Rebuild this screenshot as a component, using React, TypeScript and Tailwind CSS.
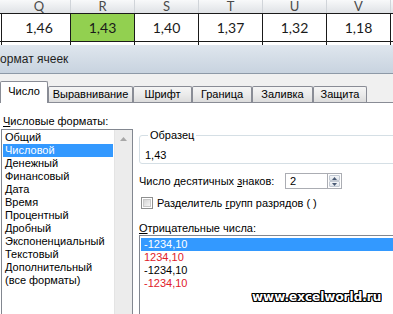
const cols = [
  { name: "Q", w: "w-[69px]", pl: "pl-[6px]", v1: "1,46", v2: "1,42", green: false },
  { name: "R", w: "w-[64px]", pl: "", v1: "1,43", v2: "1,45", green: true },
  { name: "S", w: "w-[64px]", pl: "", v1: "1,40", v2: "1,41", green: false },
  { name: "T", w: "w-[64px]", pl: "", v1: "1,37", v2: "1,38", green: false },
  { name: "U", w: "w-[64px]", pl: "", v1: "1,32", v2: "1,33", green: false },
  { name: "V", w: "w-[64px]", pl: "", v1: "1,18", v2: "1,20", green: false },
];

const tabs = [
  { label: "Число", w: "w-[48px]", active: true },
  { label: "Выравнивание", w: "w-[85px]", active: false },
  { label: "Шрифт", w: "w-[59px]", active: false },
  { label: "Граница", w: "w-[60px]", active: false },
  { label: "Заливка", w: "w-[61px]", active: false },
  { label: "Защита", w: "w-[54px]", active: false },
];

const formats = [
  "Общий",
  "Числовой",
  "Денежный",
  "Финансовый",
  "Дата",
  "Время",
  "Процентный",
  "Дробный",
  "Экспоненциальный",
  "Текстовый",
  "Дополнительный",
  "(все форматы)",
];

const negatives = [
  { text: "-1234,10", red: false, selected: true },
  { text: "1234,10", red: true, selected: false },
  { text: "-1234,10", red: false, selected: false },
  { text: "-1234,10", red: true, selected: false },
];

function Sheet() {
  return (
    <div className="h-[45px] overflow-hidden bg-white font-['Lato',sans-serif]">
      {/* заголовки столбцов */}
      <div className="flex h-[13px] bg-gradient-to-b from-[#f8f9fa] to-[#dfe2e6]">
        <div className="w-[2px]" />
        {cols.map((c) => (
          <div
            key={c.name}
            className={`${c.w} ${c.pl} flex items-center justify-center border-r border-[#d0d4d9] text-[13px] leading-none text-[#4a4a4a]`}
          >
            {c.name}
          </div>
        ))}
      </div>
      <div className="flex h-[29px] border-y border-[#1a1a1a]">
        <div className="w-[2px] border-r border-[#1a1a1a]" />
        {cols.map((c) => (
          <div
            key={c.name}
            className={`${c.w} ${c.pl} flex items-center justify-center border-r border-[#1a1a1a] text-[14px] text-[#1a1a1a] ${c.green ? "bg-[#92d050]" : ""}`}
          >
            {c.v1}
          </div>
        ))}
      </div>
      <div className="flex h-[3px] overflow-hidden">
        <div className="w-[2px] border-r border-[#1a1a1a]" />
        {cols.map((c) => (
          <div
            key={c.name}
            className={`${c.w} ${c.pl} flex items-start justify-center border-r border-[#1a1a1a] pt-[1px] text-[14px] leading-[14px] text-[#1a1a1a]`}
          >
            {c.v2}
          </div>
        ))}
      </div>
    </div>
  );
}

function Spinner() {
  return (
    <div className="flex h-[16px] w-[14px] flex-col border border-l-0 border-[#abadb3] bg-white p-[1px]">
      <div className="flex flex-1 items-center justify-center rounded-[1px] border border-[#c3cad3] bg-gradient-to-b from-[#f4f6f8] to-[#dfe4ea]">
        <svg width="5" height="3" viewBox="0 0 5 3">
          <path d="M0 3 L2.5 0 L5 3 Z" fill="#4a5a74" />
        </svg>
      </div>
      <div className="flex flex-1 items-center justify-center rounded-[1px] border border-[#c3cad3] bg-gradient-to-b from-[#f4f6f8] to-[#dfe4ea]">
        <svg width="5" height="3" viewBox="0 0 5 3">
          <path d="M0 0 L5 0 L2.5 3 Z" fill="#4a5a74" />
        </svg>
      </div>
    </div>
  );
}

export default function App() {
  return (
    <div className="relative h-[314px] w-[393px] overflow-hidden bg-white font-['Liberation_Sans',sans-serif] text-[11px] text-black">
      <Sheet />

      {/* окно диалога */}
      <div className="flex h-[29px] items-center border-b border-[#8d99a7] bg-gradient-to-b from-[#dfe6ee] to-[#c8d3df]">
        <span className="-ml-[9px] text-[12px] text-[#1e1e1e]">Формат ячеек</span>
      </div>

      <div className="flex h-[28px] items-end bg-[#f0f0f0]">
        {tabs.map((t) =>
          t.active ? (
            <div
              key={t.label}
              className={`${t.w} relative z-10 -mb-px flex h-[22px] items-center justify-center rounded-t-[2px] border border-b-0 border-[#898c95] bg-white pb-[2px]`}
            >
              {t.label}
            </div>
          ) : (
            <div
              key={t.label}
              className={`${t.w} flex h-[16px] items-center justify-center rounded-t-[2px] border border-b-0 border-[#898c95] bg-gradient-to-b from-[#f5f5f5] via-[#ebebeb] to-[#dcdcdc]`}
            >
              {t.label}
            </div>
          ),
        )}
      </div>

      <div className="flex border-t border-[#898c95] bg-white">
        {/* левая колонка */}
        <div className="flex w-[133px] shrink-0 flex-col pl-[1px] pt-[11px]">
          <div className="pl-[2px] leading-[14px]">
            <span className="underline">Ч</span>исловые форматы:
          </div>
          <div className="mt-px flex h-[200px] border border-[#828790]">
            <div className="flex-1 px-px pt-px">
              {formats.map((f) => (
                <div
                  key={f}
                  className={`h-[13px] whitespace-nowrap pl-[2px] leading-[13px] ${f === "Числовой" ? "bg-[#3399ff] text-white" : ""}`}
                >
                  {f}
                </div>
              ))}
            </div>
            <div className="flex w-[18px] justify-center border-l border-[#e4e4e4] bg-[#ececec] pt-[7px]">
              <svg width="7" height="4" viewBox="0 0 7 4">
                <path d="M0 4 L3.5 0 L7 4 Z" fill="#a7a7a7" />
              </svg>
            </div>
          </div>
        </div>

        {/* правая колонка */}
        <div className="ml-[6px] flex min-w-0 flex-1 flex-col pt-[25px]">
          <fieldset className="-mr-[10px] rounded-[3px] border border-[#d5dfe5] pb-px pl-[5px]">
            <legend className="ml-[3px] px-[2px] leading-[14px]">Образец</legend>
            <div className="pt-[6px] leading-[14px]">1,43</div>
          </fieldset>

          <div className="mt-[9px] flex items-center">
            <div className="w-[146px] shrink-0 whitespace-nowrap leading-[14px]">
              Число десятичных <span className="underline">з</span>наков:
            </div>
            <div className="flex h-[16px] w-[43px] items-center border border-[#abadb3] pl-[4px]">2</div>
            <Spinner />
          </div>

          <div className="mt-[7px] flex items-center gap-[4px] pl-[2px]">
            <div className="flex h-[12px] w-[12px] items-center justify-center border border-[#8e8f8f] bg-white">
              <div className="h-[8px] w-[8px] border border-[#c8c8c8] bg-gradient-to-br from-[#d4d4d4] to-[#f6f6f6]" />
            </div>
            <div className="whitespace-nowrap leading-[14px]">
              Разделитель <span className="underline">г</span>рупп разрядов ( )
            </div>
          </div>

          <div className="mt-[11px] leading-[14px]">
            <span className="underline">О</span>трицательные числа:
          </div>
          <div className="-mr-[10px] h-[90px] border border-[#828790] px-px pt-[2px]">
            {negatives.map((n, i) => (
              <div
                key={i}
                className={`h-[13px] pl-[3px] leading-[13px] ${n.selected ? "bg-[#3399ff] text-white" : n.red ? "text-[#e0202a]" : ""}`}
              >
                {n.text}
              </div>
            ))}
          </div>
        </div>
      </div>

      {/* водяной знак */}
      <div className="absolute left-[252px] top-[290px] font-['DejaVu_Sans',sans-serif] text-[12px] font-bold leading-[14px] text-white [text-shadow:1px_1px_0_#000,-1px_-1px_0_#000,1px_-1px_0_#000,-1px_1px_0_#000,0_1px_0_#000,0_-1px_0_#000,1px_0_0_#000,-1px_0_0_#000]">
        www.excelworld.ru
      </div>
    </div>
  );
}
